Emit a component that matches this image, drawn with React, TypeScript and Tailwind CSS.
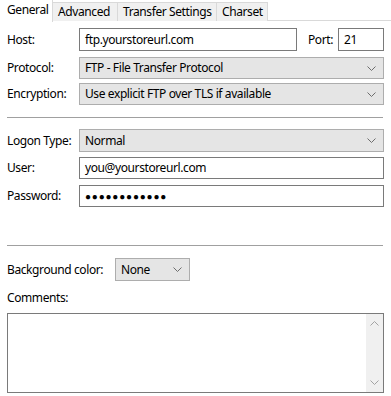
import React from 'react'

const FONT = { fontFamily: '"Segoe UI", "Noto Sans", "Open Sans", sans-serif' }

function Chevron({ up = false, color = '#6d6d6d' }: { up?: boolean; color?: string }) {
  return (
    <svg width="9" height="5" viewBox="0 0 9 5" className="block">
      <polyline
        points={up ? '0.5,4.5 4.5,0.5 8.5,4.5' : '0.5,0.5 4.5,4.5 8.5,0.5'}
        fill="none"
        stroke={color}
        strokeWidth="1"
      />
    </svg>
  )
}

function TextBox({ value, className = '' }: { value: string; className?: string }) {
  return (
    <div className={`h-full border border-[#7a7a7a] bg-white flex items-center pl-[5px] ${className}`}>
      {value}
    </div>
  )
}

function Select({ value, className = '' }: { value: string; className?: string }) {
  return (
    <div
      className={`h-full border border-[#adadad] bg-[#e5e5e5] flex items-center justify-between pl-[5px] pr-[7px] ${className}`}
    >
      <span>{value}</span>
      <Chevron />
    </div>
  )
}

function Row({ label, children, top, h }: { label: string; children: React.ReactNode; top: string; h: string }) {
  return (
    <div className={`flex items-center ${top} ${h}`}>
      <div className="w-[72px] shrink-0">{label}</div>
      <div className="flex-1 h-full">{children}</div>
    </div>
  )
}

const TABS = [
  { label: 'Advanced', w: 'w-[65px]' },
  { label: 'Transfer Settings', w: 'w-[99px]' },
  { label: 'Charset', w: 'w-[51px]' },
]

export default function App() {
  return (
    <div
      className="w-[391px] h-[396px] bg-white text-black text-[12px] tracking-[-0.4px] overflow-hidden"
      style={FONT}
    >
      {/* Tabs */}
      <div className="flex h-[21px] border-b border-[#d9d9d9]">
        <div className="w-[53px] h-[22px] bg-white pl-[7px] pt-[2px] leading-[16px] z-10 border-r border-[#d9d9d9]">
          General
        </div>
        {TABS.map((t) => (
          <div
            key={t.label}
            className={`${t.w} mt-[2px] h-[19px] bg-[#f0f0f0] border-t border-r border-[#d9d9d9] px-[5px] leading-[17px] whitespace-nowrap`}
          >
            {t.label}
          </div>
        ))}
      </div>

      <div className="px-[7px] flex flex-col">
        {/* Host / Port */}
        <div className="flex items-center mt-[7px] h-[23px]">
          <div className="w-[72px] shrink-0">Host:</div>
          <TextBox value="ftp.yourstoreurl.com" className="w-[218px]" />
          <div className="ml-[11px] w-[30px]">Port:</div>
          <TextBox value="21" className="w-[46px]" />
        </div>

        <Row label="Protocol:" top="mt-[6px]" h="h-[22px]">
          <Select value="FTP - File Transfer Protocol" />
        </Row>
        <Row label="Encryption:" top="mt-[4px]" h="h-[22px]">
          <Select value="Use explicit FTP over TLS if available" />
        </Row>

        <div className="mt-[12px] h-px bg-[#a0a0a0] mr-px" />

        <Row label="Logon Type:" top="mt-[11px]" h="h-[23px]">
          <Select value="Normal" />
        </Row>
        <Row label="User:" top="mt-[5px]" h="h-[22px]">
          <TextBox value="you@yourstoreurl.com" />
        </Row>
        <Row label="Password:" top="mt-[6px]" h="h-[22px]">
          <TextBox value="●●●●●●●●●●●●" className="text-[10px] tracking-[0.8px] pl-[4px]" />
        </Row>

        <div className="mt-[38px] h-px bg-[#a0a0a0] mr-px" />

        {/* Background color */}
        <div className="flex items-center mt-[12px] h-[23px]">
          <div className="w-[108px] shrink-0">Background color:</div>
          <Select value="None" className="w-[75px]" />
        </div>

        <div className="mt-[9px] leading-[16px]">Comments:</div>

        {/* Comments box */}
        <div className="mt-[7px] h-[80px] border border-[#7a7a7a] bg-white flex">
          <div className="flex-1" />
          <div className="w-[17px] bg-[#f0f0f0] flex flex-col items-center justify-between py-[7px]">
            <Chevron up color="#a3a3a3" />
            <Chevron color="#a3a3a3" />
          </div>
        </div>
      </div>
    </div>
  )
}
